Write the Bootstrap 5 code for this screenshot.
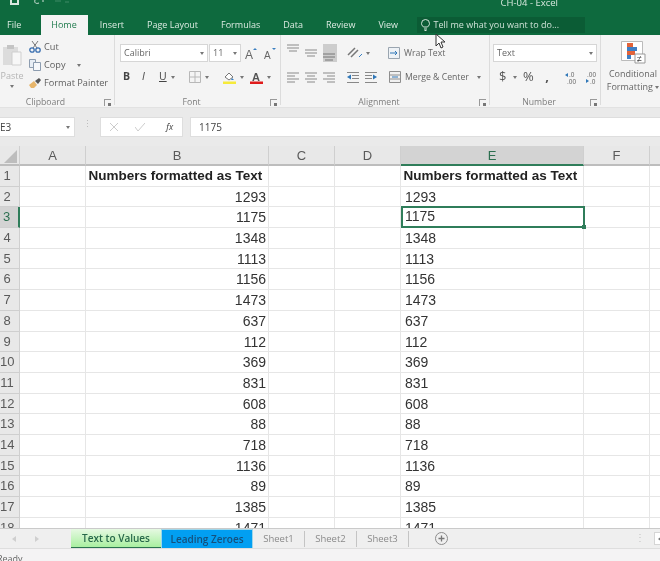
<!DOCTYPE html>
<html lang="en">

<head>
    <meta charset="UTF-8">
    <title>CH-04 - Excel</title>
    <link href="https://cdn.jsdelivr.net/npm/bootstrap@5.3.3/dist/css/bootstrap.min.css" rel="stylesheet">
    <style>
        html, body { height: 561px; overflow: hidden; }
        body { width: 660px; margin: 0; background: #f3f3f3; font-family: "Open Sans", "Liberation Sans", sans-serif; font-size: 9px; color: #555; }
        #app { position: relative; height: 561px; overflow: hidden; filter: blur(.4px); }
        svg { display: block; flex: none; }

        /* title + tabs */
        .xl-top { height: 15px; background: #0e6a3e; color: #d8e8df; line-height: 6px; overflow: hidden; }
        .xl-qat { padding-left: 10px; gap: 12px; }
        .xl-title { font-size: 9.5px; margin-right: 102px; }
        .xl-tabs { height: 20px; background: #0e6a3e; color: #dcebe2; font-size: 9px; padding-left: 7px; }
        .xl-tab { padding: 0 11.5px; line-height: 20px; white-space: nowrap; }
        .xl-tab.file { padding: 0; margin-right: 20px; }
        .xl-tab.home { background: #f4f4f4; color: #1f7a4c; padding: 0 10px; width: 47px; margin-right: 0; }
        .xl-tell { width: 168px; height: 16px; margin-left: 7px; background: #0b5c35; color: #cfe2d7; padding-left: 4px; gap: 4px; font-size: 9px; }

        /* ribbon */
        .xl-ribbon { height: 73px; background: #f4f4f4; border-bottom: 1px solid #e2e2e2; }
        .xl-group { position: relative; height: 70px; border-right: 1px solid #dcdcdc; padding-top: 9px; flex: none; }
        .g-clip { width: 115px; }
        .g-font { width: 166px; padding-left: 5px; }
        .g-align { width: 209px; padding-left: 6px; }
        .g-num { width: 111px; padding-left: 3px; }
        .g-style { border: 0; flex: 1; padding: 6px 0 0 5px; }
        .g-style svg { margin-bottom: 3px; }
        .xl-label { position: absolute; left: 0; right: 12px; top: 61px; text-align: center; color: #7d7d7d; font-size: 8.7px; line-height: 12px; }
        .g-clip .xl-label { right: 23px; }
        .xl-launch { position: absolute; right: 3px; top: 64px; width: 7px; height: 7px; border: 1px solid #999; border-width: 1px 0 0 1px; }
        .xl-launch::after { content: ""; position: absolute; right: 0; bottom: 0; width: 3px; height: 3px; background: #777; }
        .xl-row { height: 18px; }
        .xl-row + .xl-row { margin-top: 6px; }
        .xl-caret { width: 0; height: 0; border: 2.5px solid transparent; border-top: 3px solid #777; border-bottom: 0; flex: none; }
        .xl-box { background: #fff; border: 1px solid #d6d6d6; height: 18px; color: #666; font-size: 9px; line-height: 16px; padding: 0 3px; }
        .box-font { width: 88px; }
        .box-size { width: 32px; margin-left: 1px; }
        .box-num { width: 104px; }
        .paste-col { width: 24px; margin-right: 4px; color: #b5b5b5; line-height: 11px; text-align: center; }
        .clip-lines { margin-top: -6px; }
        .clip-line { height: 18px; gap: 3px; color: #5f5f5f; font-size: 9.2px; white-space: nowrap; padding-left: 1px; }
        .al-selected { background: #cdcdcd; }
        .al-btn { width: 14px; height: 18px; margin-right: 4px; }
        .big-label { color: #666; font-size: 8.7px; line-height: 13px; text-align: center; white-space: nowrap; }
        .g-style .big-label { font-size: 9px; }
        .gap-font-a { gap: 7px; margin-left: 4px; }
        .font-sym { font-size: 10.500px; color: #444; }
        .num-sym { font-size: 13px; color: #555; }
        .w-3 { width: 3px; }
        .w-6 { width: 6px; }
        .w-10 { width: 10px; }
        .w-12 { width: 12px; }
        .w-14 { width: 14px; }
        .w-16 { width: 16px; }
        .w-17 { width: 17px; }
        .w-18 { width: 18px; }
        .w-19 { width: 19px; }

        /* formula bar */
        .xl-fbar { height: 38px; background: #eaeaea; padding-top: 9px; }
        .xl-fbox { background: #fff; height: 20px; border: 1px solid #dedede; line-height: 18px; font-size: 10px; color: #444; }
        .f-name { width: 75px; padding-right: 4px; border-left: 0; }
        .f-dots { width: 25px; color: #bbb; font-size: 9px; letter-spacing: 0; }
        .f-btns { width: 83px; }
        .f-input { flex: 1; margin-left: 7px; padding-left: 8px; border-right: 0; }

        /* sheet */
        .xl-sheet { height: 382px; overflow: hidden; background: #fff; display: grid; grid-template-columns: 20px 66px 183px 66px 66px 183px 66px 66px; grid-template-rows: 20px; grid-auto-rows: 20.7px; font-family: "Liberation Sans", sans-serif; font-size: 14px; color: #333; }
        .xl-cell { border-right: 1px solid #e6e6e6; border-bottom: 1px solid #e6e6e6; padding: 0 4px; line-height: 20px; white-space: nowrap; overflow: hidden; }
        .xl-cell.num { text-align: right; padding-right: 2px; }
        .xl-cell.head { font-weight: 700; font-size: 13.500px; color: #222; padding-left: 2.500px; }
        .xl-col, .xl-rowh { background: #e8e8e8; color: #5a5a5a; border-right: 1px solid #cfcfcf; border-bottom: 1px solid #cfcfcf; text-align: center; }
        .xl-col { font-size: 13px; line-height: 19px; border-bottom: 2px solid #bdbdbd; }
        .xl-rowh { font-size: 13px; line-height: 20px; padding-right: 5px; }
        .xl-col.on { background: #d3d3d3; color: #2c6f50; border-bottom-color: #2f7d5a; }
        .xl-rowh.on { background: #d3d3d3; color: #2c6f50; border-right: 2px solid #2f7d5a; }
        .xl-corner { background: #e8e8e8; border-right: 1px solid #cfcfcf; border-bottom: 2px solid #bdbdbd; padding: 4px 0 0 4px; }
        .xl-cell.sel { position: relative; overflow: visible; border: 2px solid #2f7d5a; padding-left: 2px; line-height: 17px; margin: -1px -1px 0 0; z-index: 1; }
        .xl-cell.sel::after { content: ""; position: absolute; right: -3px; bottom: -3px; width: 4px; height: 4px; background: #2f7d5a; }

        /* sheet tabs + status */
        .xl-sheets { height: 21px; background: #efefef; border-top: 1px solid #cacaca; border-bottom: 1px solid #dedede; color: #8a8a8a; font-size: 9.500px; overflow: hidden; }
        .xl-nav { width: 71px; padding-left: 12px; gap: 19px; flex: none; }
        .xl-stab { height: 20px; line-height: 19px; text-align: center; flex: none; font-weight: 600; font-size: 10px; }
        .xl-stab.t1 { width: 90px; background: linear-gradient(#e6f9e2, #a9f0a0); color: #27684a; border-bottom: 2px solid #2c7350; }
        .xl-stab.t2 { width: 92px; background: #029ff2; color: #15507c; border: 1px solid #9ed6ea; line-height: 18px; }
        .xl-sname { width: 52px; height: 16px; line-height: 15px; border-right: 1px solid #c4c4c4; text-align: center; flex: none; }
        .xl-add { margin-left: 26px; }
        .xl-vdots { margin-left: 185px; color: #c5c5c5; width: 14px; flex: none; }
        .xl-scroll { width: 10px; height: 13px; margin-left: 7px; background: #fff; border: 1px solid #d5d5d5; border-right: 0; flex: none; }
        .xl-status { height: 12px; background: #f4f3f4; line-height: 19px; font-size: 9px; color: #666; padding-left: 0; text-indent: -3px; overflow: hidden; }
        .xl-cursor { position: absolute; left: 435px; top: 33px; }
    </style>
</head>

<body>
    <div id="app">
        <div class="xl-top d-flex justify-content-between">
            <div class="xl-qat d-flex">
                <svg width="9" height="6" viewBox="0 0 9 6"><path d="M0 0h9v5H0z" fill="#d9e8df" /><path d="M2 0h5v3H2z" fill="#0e6a3e" /></svg>
                <svg width="40" height="5" viewBox="0 0 40 5"><path d="M4 0c-1 3 1 4 4 3M12 0v2" stroke="#cfe0d6" fill="none" /><path d="M24 1h6M34 2h4" stroke="#3f8a66" /></svg>
            </div>
            <div class="xl-title">CH-04 - Excel</div>
        </div>

        <div class="xl-tabs d-flex align-items-center">
            <div class="xl-tab file">File</div>
            <div class="xl-tab home">Home</div>
            <div class="xl-tab">Insert</div>
            <div class="xl-tab">Page Layout</div>
            <div class="xl-tab">Formulas</div>
            <div class="xl-tab">Data</div>
            <div class="xl-tab">Review</div>
            <div class="xl-tab">View</div>
            <div class="xl-tell d-flex align-items-center">
                <svg width="9" height="12" viewBox="0 0 9 12"><path d="M2.5 8C1 6.500.5 5.500.5 4.500a4 4 0 0 1 8 0c0 1-.5 2-2 3.500zM3 10h3M3.500 11.500h2" fill="none" stroke="#d5e6dc" /></svg>
                <span>Tell me what you want to do...</span>
            </div>
        </div>

        <div class="xl-ribbon d-flex">
            <div class="xl-group g-clip d-flex">
                <div class="paste-col">
                    <svg width="21" height="22" viewBox="0 0 21 22" class="mx-auto mb-1"><path d="M1 3h15v18H1z" fill="#dcdcdc" /><path d="M5 1h7v4H5z" fill="#c4c4c4" /><path d="M10 8h9v13h-9z" fill="#f7f7f7" stroke="#cfcfcf" /></svg>
                    Paste
                    <div class="xl-caret mx-auto mt-1"></div>
                </div>
                <div class="clip-lines">
                    <div class="clip-line d-flex align-items-center">
                        <svg width="12" height="12" viewBox="0 0 12 12"><path d="M3 0l5 7M9 0L4 7" stroke="#777" fill="none" /><circle cx="3" cy="9" r="2.200" fill="none" stroke="#3a6fb0" stroke-width="1.300" /><circle cx="9" cy="9" r="2.200" fill="none" stroke="#3a6fb0" stroke-width="1.300" /></svg>
                        <span>Cut</span>
                    </div>
                    <div class="clip-line d-flex align-items-center">
                        <svg width="12" height="12" viewBox="0 0 12 12"><path d="M.5.500h6v8h-6z" fill="#e8eef5" stroke="#8d9db0" /><path d="M4.500 3.500h7v8h-7z" fill="#f6f8fb" stroke="#8d9db0" /></svg>
                        <span>Copy</span>
                        <div class="xl-caret ms-2"></div>
                    </div>
                    <div class="clip-line d-flex align-items-center">
                        <svg width="12" height="11" viewBox="0 0 12 11"><path d="M0 7l5-4 3 4-3 3H2z" fill="#e7b56a" /><path d="M6 3l4-3 2 2-3 4z" fill="#555" /></svg>
                        <span>Format Painter</span>
                    </div>
                </div>
                <div class="xl-label">Clipboard</div>
                <div class="xl-launch"></div>
            </div>

            <div class="xl-group g-font">
                <div class="xl-row d-flex align-items-center">
                    <div class="xl-box box-font d-flex align-items-center justify-content-between"><span>Calibri</span><div class="xl-caret"></div></div>
                    <div class="xl-box box-size d-flex align-items-center justify-content-between"><span>11</span><div class="xl-caret"></div></div>
                    <div class="gap-font-a d-flex">
                        <svg width="12" height="13" viewBox="0 0 12 13"><text x="0" y="12" font-size="12" fill="#666" font-family="Liberation Sans">A</text><path d="M8 3l2-2 2 2z" fill="#3a7fc0" /></svg>
                        <svg width="12" height="13" viewBox="0 0 12 13"><text x="0" y="12" font-size="10" fill="#666" font-family="Liberation Sans">A</text><path d="M8 1l2 2 2-2z" fill="#3a7fc0" /></svg>
                    </div>
                </div>
                <div class="xl-row d-flex align-items-center font-sym">
                    <div class="w-3"></div>
                    <b class="w-19">B</b>
                    <i class="w-17">I</i>
                    <u class="w-12">U</u>
                    <div class="xl-caret"></div>
                    <div class="w-10"></div>
                    <svg width="12" height="12" viewBox="0 0 12 12" class="ms-1"><path d="M.5.500h11v11H.5zM6 .5v11M.5 6h11" fill="none" stroke="#b8b8b8" /></svg>
                    <div class="xl-caret ms-1"></div>
                    <div class="w-14"></div>
                    <svg width="13" height="13" viewBox="0 0 13 13"><path d="M2 6l4-4 4 4-4 3z" fill="#fff" stroke="#777" /><path d="M9 7l2 2H8z" fill="#3a7fc0" /><path d="M0 10.500h13V13H0z" fill="#f6ea3a" /></svg>
                    <div class="xl-caret ms-1"></div>
                    <div class="w-6"></div>
                    <svg width="13" height="13" viewBox="0 0 13 13"><text x="2" y="9.500" font-size="11" font-weight="700" fill="#555" font-family="Liberation Sans">A</text><path d="M0 10.500h13V13H0z" fill="#e01b1b" /></svg>
                    <div class="xl-caret ms-1"></div>
                </div>
                <div class="xl-label">Font</div>
                <div class="xl-launch"></div>
            </div>

            <div class="xl-group g-align">
                <div class="xl-row d-flex align-items-center">
                    <div class="al-btn d-flex align-items-start"><svg width="12" height="9" viewBox="0 0 12 9"><path d="M0 1h12M0 4h12M2 7h8" stroke="#8a8a8a" /></svg></div>
                    <div class="al-btn d-flex align-items-center"><svg width="12" height="9" viewBox="0 0 12 9"><path d="M0 1h12M0 4h12M2 7h8" stroke="#8a8a8a" /></svg></div>
                    <div class="al-btn al-selected d-flex align-items-end"><svg width="12" height="9" viewBox="0 0 12 9"><path d="M0 1h12M0 4h12M2 7h8" stroke="#777" /></svg></div>
                    <div class="w-6"></div>
                    <svg width="15" height="12" viewBox="0 0 15 12"><path d="M1 8l7-7M4 10l7-7" stroke="#777" stroke-width="1.500" /><path d="M12 10l3-3" stroke="#3a7fc0" /></svg>
                    <div class="xl-caret ms-1"></div>
                    <div class="w-18"></div>
                    <svg width="12" height="12" viewBox="0 0 12 12"><path d="M.5.500h11v11H.5z" fill="#eef2f6" stroke="#9aa5b0" /><path d="M2 6h7l-2-2M9 6L7 8" fill="none" stroke="#2f77b8" /></svg>
                    <span class="ms-1 big-label">Wrap Text</span>
                </div>
                <div class="xl-row d-flex align-items-center">
                    <div class="al-btn"><svg width="12" height="18" viewBox="0 0 12 18"><path d="M0 5h12M0 8h8M0 11h12M0 14h8" stroke="#8a8a8a" /></svg></div>
                    <div class="al-btn"><svg width="12" height="18" viewBox="0 0 12 18"><path d="M0 5h12M2 8h8M0 11h12M2 14h8" stroke="#8a8a8a" /></svg></div>
                    <div class="al-btn"><svg width="12" height="18" viewBox="0 0 12 18"><path d="M0 5h12M4 8h8M0 11h12M4 14h8" stroke="#8a8a8a" /></svg></div>
                    <div class="w-6"></div>
                    <svg width="12" height="11" viewBox="0 0 12 11"><path d="M0 .5h12M5 3.500h7M5 6.500h7M0 10.500h12" stroke="#888" /><path d="M0 5l4-2.500v5z" fill="#2f77b8" /></svg>
                    <div class="w-6"></div>
                    <svg width="12" height="11" viewBox="0 0 12 11"><path d="M0 .5h12M0 3.500h7M0 6.500h7M0 10.500h12" stroke="#888" /><path d="M12 5L8 2.500v5z" fill="#2f77b8" /></svg>
                    <div class="w-12"></div>
                    <svg width="12" height="12" viewBox="0 0 12 12"><path d="M.5.500h11v11H.5zM.5 4h11M.5 8h11" fill="#f1f1f1" stroke="#8e8e8e" /><path d="M3 6h6" stroke="#2f77b8" /></svg>
                    <span class="ms-1 big-label">Merge &amp; Center</span>
                    <div class="xl-caret ms-2"></div>
                </div>
                <div class="xl-label">Alignment</div>
                <div class="xl-launch"></div>
            </div>

            <div class="xl-group g-num">
                <div class="xl-row d-flex">
                    <div class="xl-box box-num d-flex align-items-center justify-content-between"><span>Text</span><div class="xl-caret"></div></div>
                </div>
                <div class="xl-row d-flex align-items-center">
                    <div class="w-6"></div>
                    <span class="w-14 num-sym">$</span>
                    <div class="xl-caret"></div>
                    <div class="w-6"></div>
                    <span class="w-16 num-sym">%</span>
                    <b class="w-16 text-center num-sym">,</b>
                    <div class="w-10"></div>
                    <svg width="12" height="13" viewBox="0 0 12 13"><text x="4" y="6" font-size="6.500" fill="#666" font-family="Liberation Sans">.0</text><text x="2" y="12.500" font-size="6.500" fill="#666" font-family="Liberation Sans">.00</text><path d="M0 4l3-2v4z" fill="#2f77b8" /></svg>
                    <div class="ms-2"></div>
                    <svg width="12" height="13" viewBox="0 0 12 13"><text x="2" y="6" font-size="6.500" fill="#666" font-family="Liberation Sans">.00</text><text x="5" y="12.500" font-size="6.500" fill="#666" font-family="Liberation Sans">.0</text><path d="M4 10L1 8v4z" fill="#2f77b8" /></svg>
                </div>
                <div class="xl-label">Number</div>
                <div class="xl-launch"></div>
            </div>

            <div class="xl-group g-style">
                <svg width="25" height="23" viewBox="0 0 25 23" class="mx-auto"><path d="M.5.500h21v19H.5z" fill="#fff" stroke="#bbb" /><path d="M6 2h6v4H6z" fill="#e2633a" /><path d="M6 6h10v4H6z" fill="#3f7fc4" /><path d="M6 10h8v4H6z" fill="#e2633a" /><path d="M6 14h4v4H6z" fill="#3f7fc4" /><path d="M14 13h10v9H14z" fill="#fff" stroke="#999" /><text x="16" y="21" font-size="9" fill="#444" font-family="Liberation Sans">≠</text></svg>
                <div class="big-label">Conditional<br>Formatting <span class="d-inline-block xl-caret align-middle"></span></div>
            </div>
        </div>

        <div class="xl-fbar d-flex">
            <div class="xl-fbox f-name d-flex align-items-center justify-content-between"><span>E3</span><div class="xl-caret"></div></div>
            <div class="f-dots text-center">⋮</div>
            <div class="xl-fbox f-btns d-flex align-items-center justify-content-around">
                <svg width="8" height="8" viewBox="0 0 8 8"><path d="M0 0l8 8M8 0L0 8" stroke="#ccc" /></svg>
                <svg width="10" height="8" viewBox="0 0 10 8"><path d="M0 4l3 4 7-8" fill="none" stroke="#ccc" /></svg>
                <i class="small ms-1">fx</i>
            </div>
            <div class="xl-fbox f-input">1175</div>
        </div>

        <div class="xl-sheet" id="sheet">
            <div class="xl-corner"><svg width="13" height="13" viewBox="0 0 13 13"><path d="M13 0v13H0z" fill="#bdbdbd" /></svg></div>
        </div>

        <div class="xl-sheets d-flex align-items-center">
            <div class="xl-nav d-flex">
                <svg width="4" height="6" viewBox="0 0 4 6"><path d="M4 0v6L0 3z" fill="#cfcfcf" /></svg>
                <svg width="4" height="6" viewBox="0 0 4 6"><path d="M0 0v6l4-3z" fill="#cfcfcf" /></svg>
            </div>
            <div class="xl-stab t1">Text to Values</div>
            <div class="xl-stab t2">Leading Zeroes</div>
            <div class="xl-sname">Sheet1</div>
            <div class="xl-sname">Sheet2</div>
            <div class="xl-sname">Sheet3</div>
            <svg class="xl-add" width="13" height="13" viewBox="0 0 13 13"><circle cx="6.500" cy="6.500" r="6" fill="none" stroke="#8c8c8c" /><path d="M3.500 6.500h6M6.500 3.500v6" stroke="#777" stroke-width="1.300" /></svg>
            <div class="xl-vdots text-center">⋮</div>
            <div class="xl-scroll d-flex align-items-center justify-content-center"><svg width="4" height="6" viewBox="0 0 4 6"><path d="M4 0v6L0 3z" fill="#777" /></svg></div>
        </div>
        <div class="xl-status">Ready</div>

        <svg class="xl-cursor" width="11" height="16" viewBox="0 0 11 16"><path d="M1 1v12l3-3 2 5 2-1-2-5h4z" fill="#fff" stroke="#333" /></svg>
    </div>

    <script src="https://cdn.jsdelivr.net/npm/bootstrap@5.3.3/dist/js/bootstrap.bundle.min.js"></script>
    <script>
        const values = [1293, 1175, 1348, 1113, 1156, 1473, 637, 112, 369, 831, 608, 88, 718, 1136, 89, 1385, 1471];
        const sheet = document.getElementById('sheet');

        function addCell(cls, text) {
            const el = document.createElement('div');
            el.className = cls;
            el.textContent = text || '';
            sheet.appendChild(el);
        }

        ['A', 'B', 'C', 'D', 'E', 'F', ''].forEach(function (c) {
            addCell('xl-col' + (c === 'E' ? ' on' : ''), c);
        });

        for (let r = 1; r <= 18; r++) {
            const v = values[r - 2];
            addCell('xl-rowh' + (r === 3 ? ' on' : ''), r);
            addCell('xl-cell');
            addCell('xl-cell ' + (r === 1 ? 'head' : 'num'), r === 1 ? 'Numbers formatted as Text' : v);
            addCell('xl-cell');
            addCell('xl-cell');
            addCell('xl-cell' + (r === 1 ? ' head' : '') + (r === 3 ? ' sel' : ''), r === 1 ? 'Numbers formatted as Text' : v);
            addCell('xl-cell');
            addCell('xl-cell');
        }
    </script>
</body>

</html>
